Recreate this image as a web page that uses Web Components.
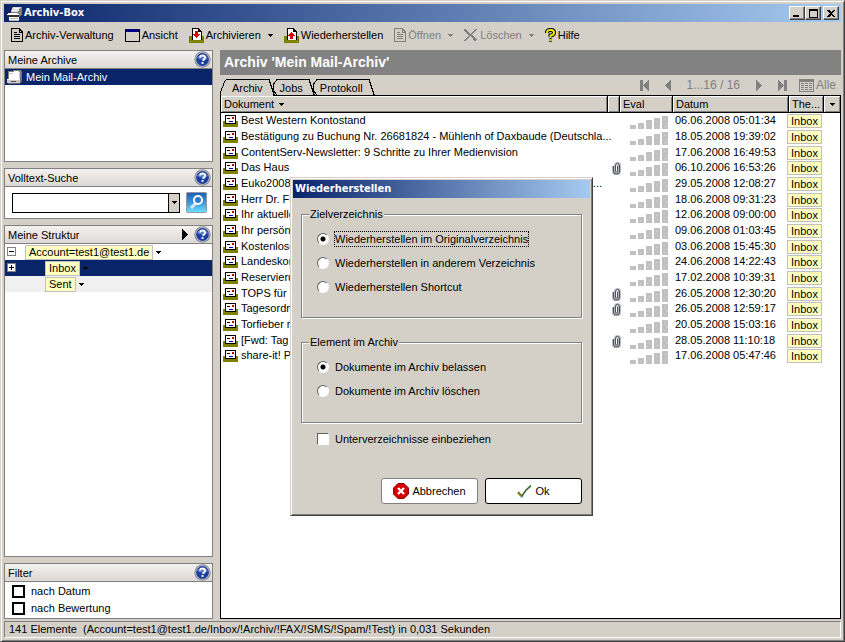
<!DOCTYPE html>
<html lang="de">
<head>
<meta charset="utf-8">
<title>Archiv-Box</title>
<style>
  html, body { height: 100%; margin: 0; }
  body {
    --face: #d4d0c8; --navy: #0a246a; --shade: #808080; --tag: #ffffc0;
    font: 11px/16px "Liberation Sans", Arial, sans-serif;
    color: #000; background: var(--face); overflow: hidden;
  }
</style>
</head>
<body>
<archive-app></archive-app>
<script>
const define = (name, html, init) => {
  const t = document.createElement('template');
  t.innerHTML = '<style>:host,*{box-sizing:border-box}button,input{font:inherit;color:inherit}</style>' + html;
  customElements.define(name, class extends HTMLElement {
    connectedCallback() {
      if (this.shadowRoot) return;
      const root = this.attachShadow({ mode: 'open' });
      root.append(t.content.cloneNode(true));
      if (init) init(this, root);
    }
  });
};

const docPath = (c, fill) => `<path d="M.5.5H8L11.5 4v9.500H.5z" fill="${fill}" stroke="${c}"/><path d="M8 .5V4h3.500M3 4.500h3M3 6.500h6M3 8.500h6M3 10.500h6" fill="none" stroke="${c}"/>`;
const tray = arrow => `<path d="M0 8h3v4h9V8h3v7H0z" fill="#808000"/><path d="M3 0h7v1H4v11H3zM10 1h1v1h1v1h1v9h-1V4H9V1h1z" fill="#000"/><path d="M4 1h5v3h3v8H4z" fill="#fff"/><path d="${arrow}" fill="#e00000"/>`;
const icons = {
  doc: [12, 14, docPath('#000', '#d4d0c8')],
  docOff: [12, 14, docPath('#808080', '#d4d0c8')],
  window: [15, 13, '<path d="M.5.5h14v12H.5z" fill="#d4d0c8" stroke="#000"/><path d="M1 0h13v3H1z" fill="#000080"/>'],
  down: [15, 15, tray('M6 3h3v3h2v1h-1v1H9v1H8v1H7V9H6V8H5V7H4V6h2z')],
  up: [15, 15, tray('M6 11h3V8h2V7h-1V6H9V5H8V4H7v1H6v1H5v1H4v1h2z')],
  cross: [14, 13, '<path d="M0 0h2v1h1v1h1v1h1v1h1v1h1V4h1V3h1V2h1V1h1V0h2v1h-1v1h-1v1h-1v1H9v1H8v1h1v1h1v1h1v1h1v1h1v1h-1v1h-2v-1H9V9H8V8H7V7H6v1H5v1H4v1H3v1H2v1H0v-1h1v-1h1V9h1V8h1V7h1V6H4V5H3V4H2V3H1V2H0z" fill="#808080"/>'],
  help: [11, 14, '<g shape-rendering="auto" fill="none"><path d="M2 5V4Q2.500 2 5 2h1q3 0 3 2.500T5.500 7.500V9M4.500 12h2" stroke="#000" stroke-width="4"/><path d="M2 5V4Q2.500 2 5 2h1q3 0 3 2.500T5.500 7.500V9M4.500 12h2" stroke="#f0e800" stroke-width="2"/></g>'],
  caret: [5, 3, '<path d="M0 0h5v1H4v1H3v1H2V2H1V1H0z" fill="currentColor"/>'],
  play: [6, 11, '<path d="M0 0l6 5.500L0 11z" fill="#000"/>'],
  app: [15, 15, '<path d="M5 1h9l1 1v6l-3 3H3z" fill="#808080"/><path d="M6 1h8l-3 5H4z" fill="#d8d8d8"/><path d="M7 2h5l-1 1H6zM5 4h5l-1 1H4z" fill="#fff"/><path d="M1 7h10l1 2H0z" fill="#fff"/><path d="M0 9h12v2H0z" fill="#303030"/><path d="M2 11h10v3H2z" fill="#fff"/><path d="M3 12h8v1H3zM2 14h10v1H2z" fill="#b0b0b0"/>'],
  drawer: [16, 16, '<path d="M0 0h16v16H0z" fill="#0a246a"/><path d="M1 2h4l1-1h8l1 2v7H1z" fill="#808080"/><path d="M2 3h4l1-1h5v8H2z" fill="#fff"/><path d="M12 3h1v7h-1zM2 4h4v1H2z" fill="#c8c8c8"/><path d="M0 10h13v4H0z" fill="#c8c8c8"/><path d="M0 10h13v1H0z" fill="#fff"/><path d="M4 12h5v1H4z" fill="#505050"/><path d="M13 10l2-5v7l-2 3H1v-1h12z" fill="#707070"/>'],
  mail: [15, 13, '<path d="M0 7h2v3h11V7h2v6H0z" fill="#808000"/><path d="M2 1h11v9H2z" fill="#000"/><path d="M3 2h9v7H3z" fill="#fff"/><path d="M4 4h3v1H4z" fill="#000"/><path d="M9 3h2v2H9z" fill="#c00000"/><path d="M6 7h4v1H6z" fill="#0000a0"/>'],
  clip: [9, 13, '<g shape-rendering="auto" fill="none"><path d="M6 3v6q0 2-1.500 2T3 9V4q0-3 2.500-3T8 4v5q0 3.500-3.500 3.500T1 9V4" stroke="#b8b8c0" stroke-width="2"/><path d="M5.500 4v5q0 1-1 1t-1-1V4q0-2.500 2-2.500t2 2.500v5q0 3-3 3t-3-3V4" stroke="#505058"/></g>'],
  bars: [38, 13, '<path d="M0 9h6v4H0zM8 7h6v6H8zM16 4h6v9h-6zM24 2h6v11h-6zM32 0h6v13h-6z" fill="#c0c0c0"/><path d="M10 10h1v1h-1zM19 7h1v1h-1zM17 10h1v1h-1zM26 5h1v1h-1zM27 9h1v1h-1zM34 3h1v1h-1zM36 7h1v1h-1zM34 10h1v1h-1z" fill="#d8d8d8"/>'],
  question: [17, 17, '<g shape-rendering="auto"><circle cx="8.500" cy="8.500" r="8.200" fill="#8a8a90"/><circle cx="8.500" cy="8.500" r="7.200" fill="#c4c8d4"/><circle cx="8.500" cy="8.500" r="6.400" fill="#1c409c"/><path d="M3 7a6 5 0 0 1 11 0q-5 3-11 0z" fill="#5c80cc"/><path d="M6 6.500Q6 4.500 8.500 4.500T11 6.500 8.500 9.500M8.500 11v2" fill="none" stroke="#fff" stroke-width="1.800"/></g>'],
  lens: [21, 21, '<defs><linearGradient id="g" x2="0" y2="1"><stop stop-color="#1c5cb8"/><stop offset=".5" stop-color="#3898e0"/><stop offset="1" stop-color="#70e0fc"/></linearGradient></defs><g shape-rendering="auto"><rect x=".5" y=".5" width="20" height="20" rx="1" fill="url(#g)" stroke="#9098a8"/><path d="M10 11l-5 5" stroke="#dce8f4" stroke-width="3"/><circle cx="12" cy="8" r="4" fill="#3078c8" stroke="#fff" stroke-width="2"/></g>'],
  first: [9, 11, '<path d="M0 0h3v11H0zM9 0v11L3 5.500z" fill="#808080"/>'],
  prev: [6, 11, '<path d="M6 0v11L0 5.500z" fill="#808080"/>'],
  next: [6, 11, '<path d="M0 0v11l6-5.500z" fill="#808080"/>'],
  last: [9, 11, '<path d="M6 0h3v11H6zM0 0v11l6-5.500z" fill="#808080"/>'],
  grid: [15, 13, '<path d="M.5.5h14v12H.5z" fill="none" stroke="#808080"/><path d="M0 0h15v3H0zM2 4h3v1H2zM6 4h3v1H6zM10 4h3v1h-3zM2 6h3v1H2zM6 6h3v1H6zM10 6h3v1h-3zM2 8h3v1H2zM6 8h3v1H6zM10 8h3v1h-3zM2 10h3v1H2zM6 10h3v1H6zM10 10h3v1h-3z" fill="#808080"/>'],
  cancel: [16, 16, '<g shape-rendering="auto"><path d="M5 .5h6L15.500 5v6L11 15.500H5L.5 11V5z" fill="#d40000" stroke="#900000"/><path d="M5 5l6 6M11 5l-6 6" stroke="#fff" stroke-width="2.400"/></g>'],
  check: [15, 13, '<g shape-rendering="auto" fill="none"><path d="M1 8l4 4Q8 5 14 1" stroke="#a0c8c8" stroke-width="2"/><path d="M1 7l3.500 4" stroke="#808000" stroke-width="2"/><path d="M4.500 11.500Q8 5 14 .5" stroke="#385820" stroke-width="1.300"/></g>'],
  plus: [9, 9, '<path d="M.5.5h8v8h-8z" fill="#fff" stroke="#808080"/><path d="M2 4h5v1H2zM4 2h1v5H4z" fill="#000"/>'],
  minus: [9, 9, '<path d="M.5.5h8v8h-8z" fill="#fff" stroke="#808080"/><path d="M2 4h5v1H2z" fill="#000"/>'],
  min: [8, 8, '<path d="M0 6h6v2H0z" fill="#000"/>'],
  max: [9, 9, '<path d="M0 0h9v9H0zM1 2v6h7V2z" fill="#000" fill-rule="evenodd"/>'],
  close: [8, 7, '<path d="M0 0h2l2 2 2-2h2L5 3.500 8 7H6L4 5 2 7H0l3-3.500z" fill="#000"/>'],
  tabLeft: [7, 17, '<path d="M0 17L6 1h1v16z" fill="#d4d0c8"/><path d="M.5 17V13L5 2l2-1.500" fill="none" stroke="#000"/>'],
  tabNotch: [4, 17, '<path d="M4 .5L.5 5v6L4 16.500" fill="none" stroke="#000"/>'],
  tabRight: [7, 17, '<path d="M0 .5h1L6.500 17" fill="none" stroke="#000"/>']
};

define('pix-icon', '<style>:host{display:inline-flex;flex:none}svg{display:block}</style>', (el, root) => {
  const [w, h, body] = icons[el.getAttribute('name')];
  root.innerHTML += `<svg width="${w}" height="${h}" viewBox="0 0 ${w} ${h}" shape-rendering="crispEdges" aria-hidden="true">${body}</svg>`;
});

define('tag-label', `<style>
  :host{display:inline-block;border:1px solid #c0c0c0;background:var(--tag);color:#000;padding:0 3px;line-height:13px;white-space:nowrap}
</style><slot></slot>`);

define('title-bar', `<style>
  :host{display:flex;align-items:center;flex:none;height:18px;padding:0 2px 0 3px;gap:2px;color:#fff;
    font:bold 11px/18px "DejaVu Sans Condensed","DejaVu Sans",sans-serif;background:linear-gradient(90deg,var(--navy),#a6caf0)}
  :host([plain]){padding-left:2px}
  span{flex:1}
  .btns{display:flex}
  button{width:16px;height:14px;padding:0;display:flex;align-items:center;justify-content:center;background:var(--face);
    border:1px solid;border-color:#fff #404040 #404040 #fff;box-shadow:inset -1px -1px var(--shade)}
  button:last-child{margin-left:2px}
  :host([plain]) .btns,:host([plain]) pix-icon{display:none}
</style><pix-icon name="app"></pix-icon><span><slot></slot></span>
<div class="btns"><button aria-label="Minimieren"><pix-icon name="min"></pix-icon></button><button aria-label="Maximieren"><pix-icon name="max"></pix-icon></button><button aria-label="Schließen"><pix-icon name="close"></pix-icon></button></div>`);

define('tool-button', `<style>
  :host{display:flex}
  button{display:flex;align-items:center;gap:2px;height:22px;padding:0;border:0;background:none;white-space:nowrap}
  button:disabled{color:var(--shade)}
  .c{margin-left:5px}
</style><button><slot></slot></button>`, (el, root) => {
  const b = root.querySelector('button');
  b.insertAdjacentHTML('afterbegin', `<pix-icon name="${el.getAttribute('icon')}"></pix-icon>`);
  if (el.hasAttribute('menu')) b.insertAdjacentHTML('beforeend', '<pix-icon class="c" name="caret"></pix-icon>');
  b.disabled = el.hasAttribute('disabled');
});

define('side-panel', `<style>
  :host{display:flex;flex-direction:column;border:1px solid var(--shade);background:#fff;min-height:0}
  header{display:flex;align-items:center;height:18px;padding:0 1px 0 3px;gap:6px;background:linear-gradient(#f4f2f0,#dcd8d4);border-bottom:1px solid var(--shade);flex:none}
  h2{font:inherit;margin:0;flex:1}
  button{padding:0;border:0;background:none;display:flex}
</style><header><h2></h2><slot name="tools"></slot><button aria-label="Hilfe"><pix-icon name="question"></pix-icon></button></header><slot></slot>`,
  (el, root) => root.querySelector('h2').textContent = el.getAttribute('heading'));

define('search-field', `<style>
  :host{display:flex;align-items:center;gap:6px;padding:5px 5px 5px 7px}
  .combo{flex:1;display:flex;height:20px;border:1px solid #000;background:#fff;min-width:0}
  input{flex:1;min-width:0;border:0;padding:0 3px;outline:0}
  button{padding:0;border:0;background:none;display:flex}
  .combo button{width:11px;background:var(--face);border-left:1px solid #000;align-items:center;justify-content:center}
</style><div class="combo"><input type="text" aria-label="Volltext-Suche"><button aria-label="Verlauf"><pix-icon name="caret"></pix-icon></button></div>
<button aria-label="Suchen"><pix-icon name="lens"></pix-icon></button>`);

define('tree-row', `<style>
  :host{display:flex;align-items:center;height:16px;padding:0 2px;gap:3px}
  :host([selected]){background:var(--navy);color:#fff}
  :host([odd]){background:#f0f0f0}
  .x{width:15px;display:flex;align-items:center;padding-bottom:2px}
  :host([deep]) .x{width:35px}
  .c{color:#000}
</style><span class="x"></span><tag-label><slot></slot></tag-label><pix-icon class="c" name="caret"></pix-icon>`, (el, root) => {
  const s = el.getAttribute('state');
  if (s) root.querySelector('.x').innerHTML = `<pix-icon name="${s}"></pix-icon>`;
});

define('tab-strip', `<style>
  :host{display:flex;align-items:flex-end}
  button{display:flex;height:17px;padding:0;border:0;background:none;margin-right:-2px}
  span{border-top:1px solid #000;padding:0 5px;line-height:17px}
  .t{display:flex}
  .back span{padding:0 5px 0 3px}
  .fill{flex:1}
  .back button,.fill{border-bottom:1px solid #000}
</style><div class="t"><button role="tab" aria-selected="true"><pix-icon name="tabLeft"></pix-icon><span>Archiv</span><pix-icon name="tabRight"></pix-icon></button></div>
<div class="t back"><button role="tab"><pix-icon name="tabNotch"></pix-icon><span>Jobs</span><pix-icon name="tabRight"></pix-icon></button></div>
<div class="t back"><button role="tab"><pix-icon name="tabNotch"></pix-icon><span>Protokoll</span><pix-icon name="tabRight"></pix-icon></button></div><div class="fill"></div>`);

define('page-nav', `<style>
  :host{display:flex;align-items:center;gap:16px;color:var(--shade);font-size:12px}
  button{padding:0;border:0;background:none;display:flex;align-items:center;gap:2px}
  .all{margin-left:-4px}
</style><button aria-label="Erste Seite"><pix-icon name="first"></pix-icon></button><button aria-label="Zurück"><pix-icon name="prev"></pix-icon></button><span>1...16 / 16</span>
<button aria-label="Weiter"><pix-icon name="next"></pix-icon></button><button aria-label="Letzte Seite"><pix-icon name="last"></pix-icon></button><button class="all"><pix-icon name="grid"></pix-icon>Alle</button>`);

/* subject, date, has attachment, trailing mark at the column's end */
const mails = [
  ['Best Western Kontostand', '06.06.2008 05:01:34'],
  ['Bestätigung zu Buchung Nr. 26681824 - Mühlenh of Daxbaude (Deutschla...', '18.05.2008 19:39:02'],
  ['ContentServ-Newsletter: 9 Schritte zu Ihrer Medienvision', '17.06.2008 16:49:53'],
  ['Das Haus', '06.10.2006 16:53:26', 1],
  ['Euko2008', '29.05.2008 12:08:27', 0, '...'],
  ['Herr Dr. Fu', '18.06.2008 09:31:23'],
  ['Ihr aktuelle', '12.06.2008 09:00:00'],
  ['Ihr persönl', '09.06.2008 01:03:45'],
  ['Kostenlose', '03.06.2008 15:45:30'],
  ['Landeskon', '24.06.2008 14:22:43'],
  ['Reservieru', '17.02.2008 10:39:31'],
  ['TOPS für V', '26.05.2008 12:30:20', 1],
  ['Tagesordn', '26.05.2008 12:59:17', 1],
  ['Torfieber m', '20.05.2008 15:03:16'],
  ['[Fwd: Tag', '28.05.2008 11:10:18', 1],
  ['share-it! Pr', '17.06.2008 05:47:46']
];
define('mail-table', `<style>
  :host{display:block;background:#fff;border:1px solid #000;border-top:0;min-height:0;overflow:hidden}
  table{width:100%;border-collapse:separate;border-spacing:0;table-layout:fixed}
  th{height:17px;padding:0 0 0 3px;font-weight:normal;text-align:left;line-height:15px;background:var(--face);white-space:nowrap;
    border-bottom:1px solid #000;border-right:1px solid #000;box-shadow:inset 1px 1px #fff,inset -1px -1px var(--shade)}
  th:last-child{border-right:0;text-align:center;padding:0}
  th pix-icon{margin-left:5px;vertical-align:2px}
  th:last-child pix-icon{margin:0}
  td{height:16px;padding:0 2px;line-height:15px;vertical-align:top;white-space:nowrap}
  tr:nth-child(3n) td{height:15px}
  td>div{display:flex;gap:3px;height:15px}
  .m{padding-top:1px}
  .end{margin-left:auto;padding-right:4px}
  td:nth-child(2){padding:0}
  td:nth-child(2)>div{padding:2px 0 0 4px}
  td:nth-child(3)>div{padding:3px 0 0 8px}
  td:nth-child(5){padding:0}
  td:nth-child(5)>div{padding-top:1px;margin-left:-2px}
</style><table><colgroup><col><col style="width:12px"><col style="width:53px"><col style="width:116px"><col style="width:35px"><col style="width:16px"></colgroup>
<thead><tr><th>Dokument<pix-icon name="caret"></pix-icon></th><th></th><th>Eval</th><th>Datum</th><th>The...</th><th><pix-icon name="caret"></pix-icon></th></tr></thead><tbody></tbody></table>`,
  (el, root) => root.querySelector('tbody').innerHTML = mails.map(([s, d, c, e]) => `<tr><td><div><pix-icon class="m" name="mail"></pix-icon><span>${s}</span>${e ? `<span class="end">${e}</span>` : ''}</div></td><td><div>${c ? '<pix-icon name="clip"></pix-icon>' : ''}</div></td><td><div><pix-icon name="bars"></pix-icon></div></td><td>${d}</td><td><div><tag-label>Inbox</tag-label></div></td><td></td></tr>`).join(''));

define('filter-list', `<style>
  :host{display:flex;flex-direction:column;gap:1px;padding:1px 7px 2px}
  label{display:flex;align-items:center;gap:6px;height:16px}
  input{appearance:none;width:13px;height:13px;margin:0;border:2px solid #000;background:#fff}
</style><label><input type="checkbox">nach Datum</label><label><input type="checkbox">nach Bewertung</label>`);

define('option-group', `<style>
  :host{display:block}
  fieldset{height:100%;min-width:0;margin:0;padding:9px 15px 0;border:1px solid var(--shade);box-shadow:1px 1px #fff,inset 1px 1px #fff;display:flex;flex-direction:column;gap:8px}
  legend{margin-left:-8px;padding:0 1px;line-height:16px;background:var(--face)}
  label{display:flex;align-items:center;gap:6px;height:16px}
  input{appearance:none;flex:none;width:12px;height:12px;margin:0;border-radius:50%;border:1px solid;border-color:#606060 #fff #fff #606060;background:#fff;outline:0}
  input:checked{background:radial-gradient(circle,#000 2px,#fff 3px)}
  .focus span{outline:1px dotted #000}
  label span{line-height:14px}
</style><fieldset><legend></legend></fieldset>`, (el, root) => {
  root.querySelector('legend').textContent = el.getAttribute('heading');
  root.querySelector('fieldset').insertAdjacentHTML('beforeend', el.getAttribute('options').split('|').map((o, i) =>
    `<label class="${i === 0 && el.hasAttribute('focused') ? 'focus' : ''}"><input type="radio" name="choice" ${i ? '' : 'checked'}><span>${o}</span></label>`).join(''));
});

define('dialog-button', `<style>
  :host{display:block;width:97px}
  button{width:100%;height:26px;padding:0;display:flex;align-items:center;justify-content:center;gap:3px;background:#fff;border:1px solid var(--shade);border-radius:3px}
  :host([default]) button{border-color:#000}
</style><button><slot></slot></button>`);

define('restore-dialog', `<style>
  :host{display:flex;flex-direction:column;width:303px;padding:2px;background:var(--face);
    border:1px solid;border-color:var(--face) #404040 #404040 var(--face);box-shadow:inset 1px 1px #fff,inset -1px -1px var(--shade)}
  .body{padding:8px 8px 9px}
  .one{height:112px}
  .two{height:89px;margin-top:16px}
  label{display:flex;align-items:center;gap:6px;height:16px;margin:8px 0 31px 16px}
  input{appearance:none;width:12px;height:12px;margin:0;background:#fff;border:1px solid;border-color:#606060 #fff #fff #606060}
  footer{display:flex;justify-content:flex-end;gap:7px}
</style><title-bar plain>Wiederherstellen</title-bar>
<div class="body">
<option-group class="one" focused heading="Zielverzeichnis" options="Wiederherstellen im Originalverzeichnis|Wiederherstellen in anderem Verzeichnis|Wiederherstellen Shortcut"></option-group>
<option-group class="two" heading="Element im Archiv" options="Dokumente im Archiv belassen|Dokumente im Archiv löschen"></option-group>
<label><input type="checkbox">Unterverzeichnisse einbeziehen</label>
<footer><dialog-button><pix-icon name="cancel"></pix-icon>Abbrechen</dialog-button><dialog-button default><pix-icon name="check"></pix-icon>Ok</dialog-button></footer>
</div>`);

define('archive-app', `<style>
  :host{display:flex;flex-direction:column;height:100%;padding:3px;background:var(--face);position:relative;
    border:1px solid;border-color:var(--face) #404040 #404040 var(--face);box-shadow:inset 1px 1px #fff,inset -1px -1px var(--shade)}
  nav{display:flex;align-items:center;gap:11px;height:28px;padding:0 7px 2px;flex:none}
  main{flex:1;display:flex;gap:7px;min-height:0}
  aside{width:209px;flex:none;display:flex;flex-direction:column;gap:6px}
  .archives{height:112px}
  .tree{flex:1}
  .row{display:flex;align-items:center;gap:3px;height:16px;padding-left:2px;background:var(--navy);color:#fff}
  .play{padding:0;border:0;background:none;display:flex}
  section{flex:1;min-width:0;display:flex;flex-direction:column}
  h1{margin:0;padding-left:4px;font-size:14px;line-height:25px;color:#fff;background:#828282}
  .bar{display:flex;height:21px;align-items:flex-end}
  tab-strip{flex:1}
  page-nav{padding:0 5px 0 0;border-bottom:1px solid #000;height:21px}
  mail-table{flex:1}
  footer{flex:none;height:17px;margin-top:2px;padding-left:4px;line-height:15px;border:1px solid;border-color:var(--shade) #fff #fff var(--shade)}
  restore-dialog{position:absolute;left:289px;top:176px}
</style>
<title-bar>Archiv-Box</title-bar>
<nav><tool-button icon="doc">Archiv-Verwaltung</tool-button><tool-button icon="window">Ansicht</tool-button><tool-button icon="down" menu>Archivieren</tool-button><tool-button icon="up">Wiederherstellen</tool-button><tool-button icon="docOff" menu disabled>Öffnen</tool-button><tool-button icon="cross" menu disabled>Löschen</tool-button><tool-button icon="help">Hilfe</tool-button></nav>
<main>
<aside>
<side-panel class="archives" heading="Meine Archive"><div class="row"><pix-icon name="drawer"></pix-icon>Mein Mail-Archiv</div></side-panel>
<side-panel heading="Volltext-Suche"><search-field></search-field></side-panel>
<side-panel class="tree" heading="Meine Struktur"><button class="play" slot="tools" aria-label="Ausklappen"><pix-icon name="play"></pix-icon></button>
<tree-row state="minus">Account=test1@test1.de</tree-row><tree-row state="plus" deep selected>Inbox</tree-row><tree-row deep odd>Sent</tree-row></side-panel>
<side-panel heading="Filter"><filter-list></filter-list></side-panel>
</aside>
<section><h1>Archiv 'Mein Mail-Archiv'</h1><div class="bar"><tab-strip></tab-strip><page-nav></page-nav></div><mail-table></mail-table></section>
</main>
<footer>141 Elemente&nbsp; (Account=test1@test1.de/Inbox/!Archiv/!FAX/!SMS/!Spam/!Test) in 0,031 Sekunden</footer>
<restore-dialog role="dialog" aria-label="Wiederherstellen"></restore-dialog>`);
</script>
</body>
</html>
